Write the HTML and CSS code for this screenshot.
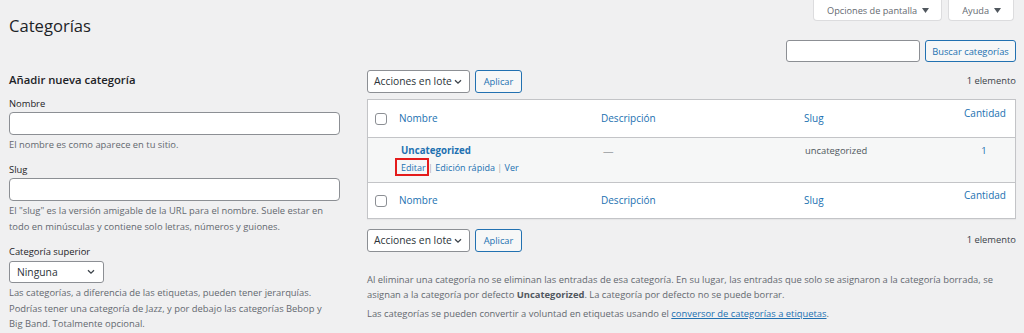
FILE: index.html
```html
<!DOCTYPE html>
<html lang="es">
<head>
  <meta charset="UTF-8" />
  <meta name="viewport" content="width=device-width, initial-scale=1.0"/>
  <title>Categorías</title>
  <link rel="stylesheet" href="styles.css">
</head>
<body>
  <div class="wrap">

    <!-- Título y pestañas de pantalla -->
    <div class="top">
      <h1>Categorías</h1>
      <div class="screen-tabs">
        <button class="tab">Opciones de pantalla <svg width="7" height="5" viewBox="0 0 7 5"><path d="M0 0h7L3.5 5z" fill="#50575e"/></svg></button>
        <button class="tab">Ayuda <svg width="7" height="5" viewBox="0 0 7 5"><path d="M0 0h7L3.5 5z" fill="#50575e"/></svg></button>
      </div>
    </div>

    <!-- Buscador -->
    <div class="search-box">
      <input type="text" class="search-input" />
      <button class="btn">Buscar categorías</button>
    </div>

    <div class="cols">

      <!-- Columna izquierda: formulario -->
      <div class="col-left">
        <h2>Añadir nueva categoría</h2>

        <label class="lbl lbl-first">Nombre</label>
        <input type="text" class="field" />
        <p class="help">El nombre es como aparece en tu sitio.</p>

        <label class="lbl">Slug</label>
        <input type="text" class="field" />
        <p class="help">El "slug" es la versión amigable de la URL para el nombre. Suele estar en todo en minúsculas y contiene solo letras, números y guiones.</p>

        <label class="lbl">Categoría superior</label>
        <div class="select select-parent">
          <span>Ninguna</span>
          <svg width="8" height="6" viewBox="0 0 8 6"><path d="M1 1.2l3 3 3-3" fill="none" stroke="#3c434a" stroke-width="1.3"/></svg>
        </div>
        <p class="help">Las categorías, a diferencia de las etiquetas, pueden tener jerarquías. Podrías tener una categoría de Jazz, y por debajo las categorías Bebop y Big&nbsp;Band. Totalmente opcional.</p>
      </div>

      <!-- Columna derecha: lista -->
      <div class="col-right">
        <div class="tablenav">
          <div class="bulk">
            <div class="select select-bulk">
              <span>Acciones en lote</span>
              <svg width="8" height="6" viewBox="0 0 8 6"><path d="M1 1.2l3 3 3-3" fill="none" stroke="#3c434a" stroke-width="1.3"/></svg>
            </div>
            <button class="btn">Aplicar</button>
          </div>
          <span class="count">1 elemento</span>
        </div>

        <div class="table">
          <div class="row row-head">
            <div class="cell cell-check"><span class="check"></span></div>
            <div class="cell"><a>Nombre</a></div>
            <div class="cell"><a>Descripción</a></div>
            <div class="cell"><a>Slug</a></div>
            <div class="cell cell-posts"><a>Cantidad</a></div>
          </div>

          <div class="row row-body">
            <div class="cell cell-check"></div>
            <div class="cell cell-name">
              <a class="row-title">Uncategorized</a>
              <div class="row-actions">
                <a class="marked">Editar</a> <span class="sep">|</span> <a>Edición rápida</a> <span class="sep">|</span> <a>Ver</a>
              </div>
            </div>
            <div class="cell cell-top dash">—</div>
            <div class="cell cell-top slug">uncategorized</div>
            <div class="cell cell-top cell-num"><a>1</a></div>
          </div>

          <div class="row row-foot">
            <div class="cell cell-check"><span class="check"></span></div>
            <div class="cell"><a>Nombre</a></div>
            <div class="cell"><a>Descripción</a></div>
            <div class="cell"><a>Slug</a></div>
            <div class="cell cell-posts"><a>Cantidad</a></div>
          </div>
        </div>

        <div class="tablenav tablenav-bottom">
          <div class="bulk">
            <div class="select select-bulk">
              <span>Acciones en lote</span>
              <svg width="8" height="6" viewBox="0 0 8 6"><path d="M1 1.2l3 3 3-3" fill="none" stroke="#3c434a" stroke-width="1.3"/></svg>
            </div>
            <button class="btn">Aplicar</button>
          </div>
          <span class="count">1 elemento</span>
        </div>

        <div class="notes">
          <p>Al eliminar una categoría no se eliminan las entradas de esa categoría. En su lugar, las entradas que solo se asignaron a la categoría borrada, se asignan a la categoría por defecto <strong>Uncategorized</strong>. La categoría por defecto no se puede borrar.</p>
          <p>Las categorías se pueden convertir a voluntad en etiquetas usando el <a class="link">conversor de categorías a etiquetas</a>.</p>
        </div>
      </div>

    </div>
  </div>
</body>
</html>
```

FILE: styles.css
```css
/* Estilo general */
body {
  margin: 0;
  background-color: #f0f0f1;
  color: #3c434a;
  font-family: "Open Sans", sans-serif;
  font-size: 9.4px;
  line-height: 1.5;
}

.wrap {
  padding: 0 8px 0 9px;
}

a {
  color: #2271b1;
  text-decoration: none;
}

/* Cabecera */
.top {
  display: flex;
  justify-content: space-between;
  align-items: flex-start;
  height: 38px;
}

h1 {
  margin: 0;
  padding-top: 14px;
  font-size: 16.6px;
  font-weight: 400;
  line-height: 24px;
  color: #1d2327;
}

.screen-tabs {
  display: flex;
  gap: 6px;
  margin-right: 2px;
}

.tab {
  display: flex;
  align-items: center;
  gap: 5px;
  height: 21px;
  padding: 0 12px 0 13px;
  background: #fff;
  border: 1px solid #dcdcde;
  border-top: none;
  border-radius: 0 0 4px 4px;
  font-family: inherit;
  font-size: 9.2px;
  color: #646970;
}

/* Buscador */
.search-box {
  display: flex;
  justify-content: flex-end;
  gap: 5px;
  margin-top: 2px;
}

.search-input {
  width: 134px;
  height: 22px;
  box-sizing: border-box;
  border: 1px solid #8c8f94;
  border-radius: 3px;
  background: #fff;
  margin: 0;
}

/* Botones secundarios */
.btn {
  height: 22px;
  box-sizing: border-box;
  padding: 0 6px;
  border: 1px solid #2271b1;
  border-radius: 3px;
  background: #f6f7f7;
  color: #2271b1;
  font-family: inherit;
  font-size: 9.3px;
  cursor: pointer;
}

.search-box .btn {
  width: 91px;
}

/* Columnas */
.cols {
  display: grid;
  grid-template-columns: 331px 1fr;
  column-gap: 27px;
}

/* Formulario */
h2 {
  margin: 9px 0 0;
  font-size: 11.3px;
  font-weight: 600;
  line-height: 18px;
  color: #1d2327;
}

.lbl {
  display: block;
  margin-top: 10px;
  line-height: 16px;
  color: #1d2327;
}

.lbl-first {
  margin-top: 7px;
}

.field {
  display: block;
  width: 100%;
  height: 23px;
  box-sizing: border-box;
  margin: 0;
  border: 1px solid #8c8f94;
  border-radius: 4px;
  background: #fff;
}

.help {
  margin: 2px 0 0;
  line-height: 15.4px;
  color: #646970;
}

/* Selects */
.select {
  display: flex;
  justify-content: space-between;
  align-items: center;
  box-sizing: border-box;
  background: #fff;
  border: 1px solid #8c8f94;
  border-radius: 3px;
  color: #2c3338;
  font-size: 10.3px;
}

.select-parent {
  width: 95px;
  height: 22px;
  margin-top: 1px;
  padding: 0 8px 0 7px;
}

.select-bulk {
  width: 103px;
  height: 23px;
  padding: 0 7px 0 6px;
}

/* Navegación de la tabla */
.tablenav {
  display: flex;
  justify-content: space-between;
  align-items: center;
  margin-top: 8px;
}

.tablenav-bottom {
  margin-top: 10px;
}

.bulk {
  display: flex;
  gap: 5px;
}

.bulk .btn {
  width: 47px;
  height: 23px;
}

.count {
  color: #3c434a;
}

/* Tabla */
.table {
  margin-top: 6px;
  background: #fff;
  border: 1px solid #c3c4c7;
  box-shadow: 0 1px 1px rgba(0, 0, 0, 0.04);
}

.row {
  display: grid;
  grid-template-columns: 24px 202px 203px 158px 1fr;
}

.row-head {
  height: 37px;
  border-bottom: 1px solid #c3c4c7;
}

.row-body {
  height: 44px;
  background: #f6f7f7;
}

.row-foot {
  height: 35px;
  border-top: 1px solid #c3c4c7;
}

.cell {
  display: flex;
  align-items: center;
  padding-left: 7px;
  font-size: 10px;
}

.cell-check {
  padding-left: 7px;
}

.check {
  width: 12px;
  height: 12px;
  box-sizing: border-box;
  border: 1px solid #8c8f94;
  border-radius: 3px;
  background: #fff;
}

.cell-posts {
  justify-content: center;
  padding: 0 0 10px;
}

.cell-top {
  align-items: flex-start;
  padding-top: 6px;
  line-height: 14px;
  font-size: 9.4px;
}

.cell-name {
  flex-direction: column;
  align-items: flex-start;
  padding: 6px 0 0 9px;
}

.row-title {
  font-size: 9.7px;
  font-weight: 700;
  line-height: 14px;
  color: #2271b1;
}

.row-actions {
  margin-top: 2px;
  line-height: 15px;
  font-size: 9px;
  color: #a7aaad;
}

.row-actions .sep {
  color: #a7aaad;
}

/* Recuadro rojo sobre "Editar" */
.marked {
  position: relative;
}

.marked::after {
  content: "";
  position: absolute;
  left: -6px;
  right: -3px;
  top: -3px;
  bottom: -2px;
  border: 2px solid #e41c1c;
}

.dash {
  color: #a7aaad;
  padding-left: 9px;
  font-size: 10.5px;
}

.slug {
  color: #50575e;
  padding-left: 8px;
}

.cell-num {
  justify-content: center;
  padding-left: 0;
  padding-right: 2px;
}

/* Notas */
.notes {
  margin-top: 20px;
  color: #646970;
}

.notes p {
  margin: 0 0 3.5px;
  line-height: 15px;
}

.notes strong {
  font-weight: 700;
  color: #50575e;
}

.link {
  text-decoration: underline;
}
```
